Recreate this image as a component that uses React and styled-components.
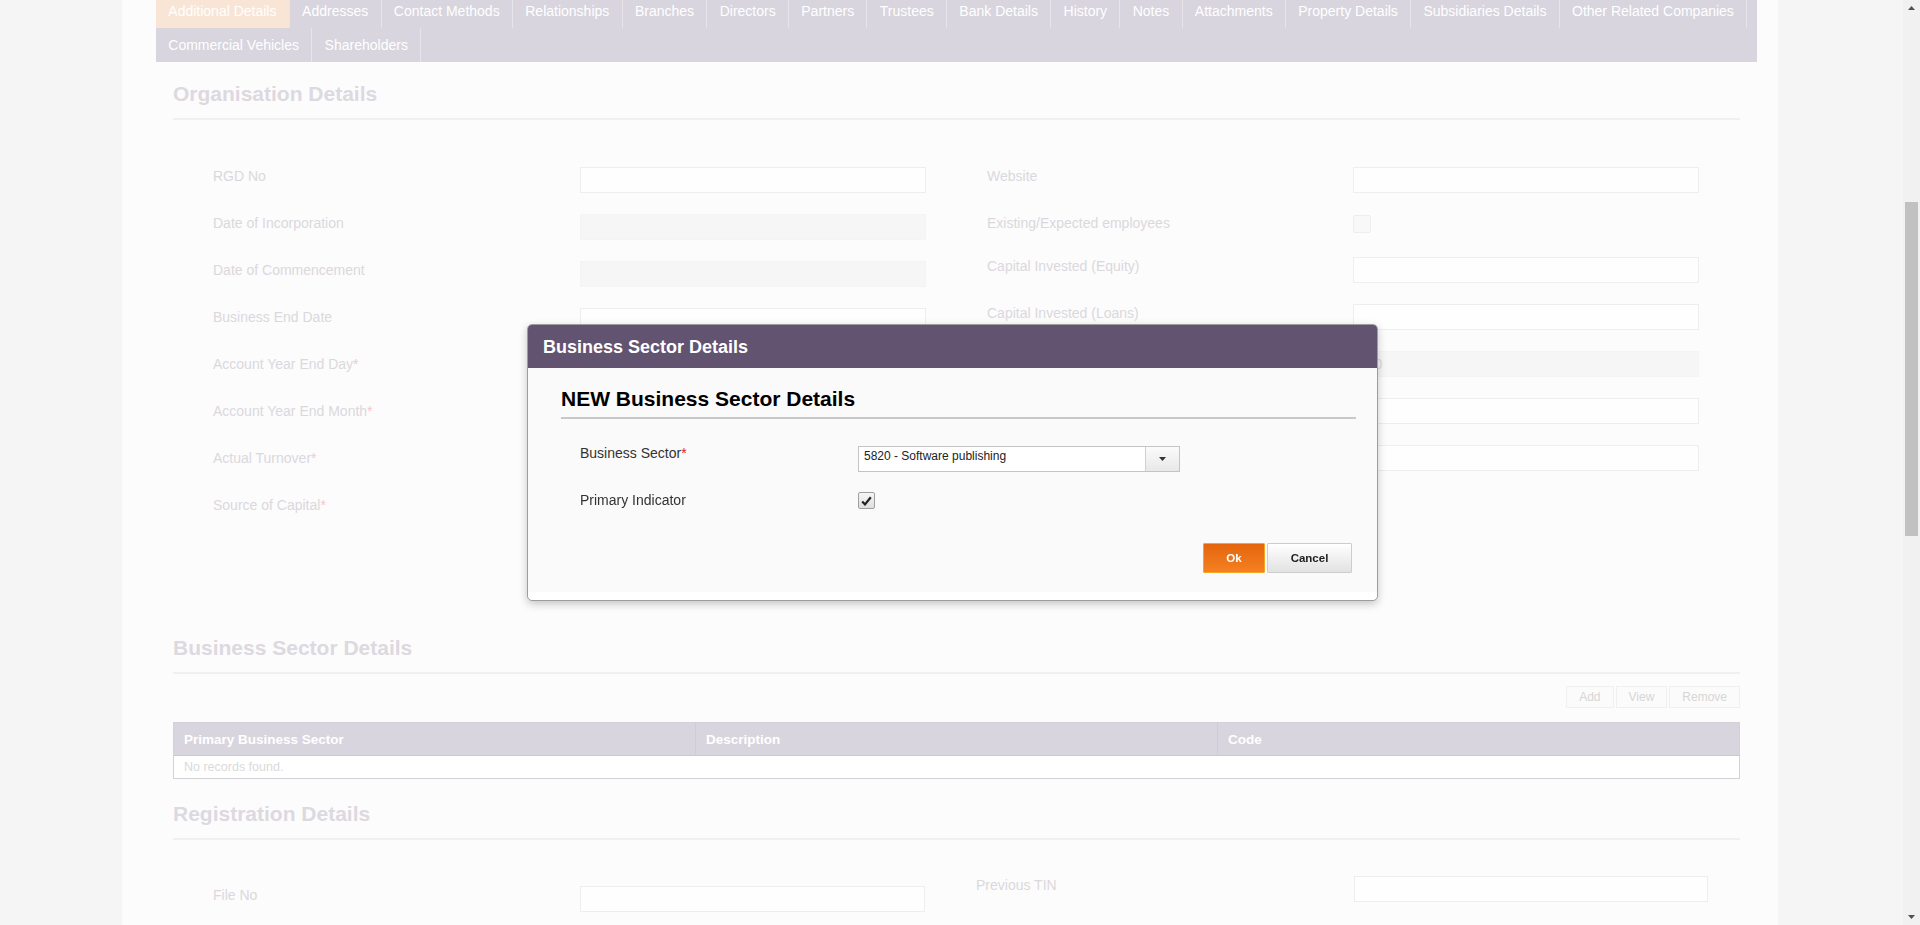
import React from "react";
import styled, { createGlobalStyle } from "styled-components";

const Global = createGlobalStyle`
  html, body { margin: 0; padding: 0; height: 100%; overflow: hidden; }
  body { font-family: "Liberation Sans", Arial, sans-serif; background: #f5f5f5; }
  * { box-sizing: border-box; }
`;

const Screen = styled.div`
  display: flex;
  height: 925px;
  overflow: hidden;
  background: #f5f5f5;
`;

const Viewport = styled.div`
  flex: 1;
  overflow: hidden;
`;

const Panel = styled.div`
  margin-left: 122px;
  width: 1656px;
  min-height: 100%;
  background: #fcfcfc;
  padding: 0 21px 40px 34px;
`;

const TabBar = styled.ul`
  list-style: none;
  margin: -6px 0 0;
  padding: 0;
  display: flex;
  flex-wrap: wrap;
  background: #d8d5de;
`;

const Tab = styled.li`
  height: 34px;
  line-height: 34px;
  padding: 0 12.3px;
  font-size: 14px;
  color: #ffffff;
  white-space: nowrap;
  border-right: 1px solid #e7e5eb;
  background: ${(p) => (p.$active ? "#f9e5d6" : "transparent")};
`;

const Section = styled.section`
  margin: ${(p) => p.$mt}px 17px 0;
`;

const SectionTitle = styled.h2`
  margin: 0;
  font-size: 21px;
  line-height: 24px;
  font-weight: 700;
  color: #dcd9e0;
  padding-bottom: 12px;
  border-bottom: 2px solid #f0f0f0;
`;

const FormGrid = styled.div`
  display: flex;
  align-items: flex-start;
  gap: ${(p) => p.$gap}px;
  padding-left: 40px;
  margin-top: ${(p) => p.$mt}px;
`;

const Column = styled.div`
  display: flex;
  flex-direction: column;
  margin-top: ${(p) => p.$offset || 0}px;
`;

const Field = styled.div`
  display: grid;
  grid-template-columns: ${(p) => p.$labelW}px ${(p) => p.$inputW}px;
  padding-bottom: 20px;
`;

const Label = styled.label`
  font-size: 14px;
  line-height: 20px;
  color: #dbd8dd;
  white-space: nowrap;
`;

const Req = styled.span`
  color: #f6c6c8;
`;

const TextBox = styled.div`
  margin-top: 1px;
  height: 26px;
  border: 1px solid ${(p) => (p.$disabled ? "#f4f4f4" : "#eeeeee")};
  background: ${(p) => (p.$disabled ? "#f6f6f6" : "#fefefe")};
  font-size: 14px;
  line-height: 24px;
  padding: 0 5px;
  color: #d9d9d9;
`;

const CheckCell = styled.div`
  height: 23px;
  padding-top: 2px;
`;

const FadedCheck = styled.span`
  display: block;
  width: 18px;
  height: 18px;
  border: 1px solid #eeeeee;
  border-radius: 2px;
  background: #f8f8f8;
`;

const Toolbar = styled.div`
  display: flex;
  justify-content: flex-end;
  gap: 2px;
  margin-top: 12px;
`;

const ToolButton = styled.button`
  height: 22px;
  padding: 0 12px;
  border: 1px solid #f0f0f0;
  background: #fbfbfb;
  font-family: inherit;
  font-size: 12px;
  color: #d6d6d6;
`;

const Table = styled.table`
  width: 100%;
  margin-top: 14px;
  border-collapse: collapse;
  table-layout: fixed;
  border: 1px solid #d4d2d8;
`;

const Th = styled.th`
  height: 33px;
  padding: 0 10px;
  text-align: left;
  font-size: 13.5px;
  font-weight: 700;
  color: #ffffff;
  background: #d8d5de;
  border-left: 1px solid #cfccd5;
  border-bottom: 1px solid #cbc9cf;
  &:first-child { border-left: none; }
`;

const Td = styled.td`
  height: 23px;
  padding: 0 10px;
  font-size: 12.5px;
  color: #dadada;
  background: #ffffff;
`;

/* ---------- Scrollbar drawing ---------- */
const ScrollBar = () => (
  <svg width="17" height="925" viewBox="0 0 17 925" style={{ display: "block", flex: "none" }}>
    <rect x="0" y="0" width="17" height="925" fill="#f1f1f1" />
    <rect x="2" y="202" width="13" height="334" fill="#c1c1c1" />
    <polygon points="5,10 12,10 8.5,6" fill="#505050" />
    <polygon points="5,915 12,915 8.5,919" fill="#505050" />
  </svg>
);

/* ---------- Modal ---------- */
const Overlay = styled.div`
  position: fixed;
  top: 0;
  left: 0;
  right: 17px;
  bottom: 0;
  display: flex;
  align-items: center;
  justify-content: center;
`;

const Modal = styled.div`
  width: 851px;
  margin-left: 2px;
  background: #ffffff;
  border: 1px solid #9d9d9d;
  border-radius: 5px;
  box-shadow: 0 3px 9px rgba(0, 0, 0, 0.22);
  overflow: hidden;
`;

const ModalHeader = styled.div`
  height: 43px;
  display: flex;
  align-items: center;
  padding: 2px 0 0 15px;
  background: #625371;
  color: #ffffff;
  font-size: 18px;
  font-weight: 700;
`;

const ModalContent = styled.div`
  background: #fafafa;
  margin-bottom: 8px;
  padding: 19px 21px 19px 33px;
`;

const ModalTitle = styled.h3`
  margin: 0;
  font-size: 21px;
  line-height: 24px;
  font-weight: 700;
  color: #000000;
  padding-bottom: 6px;
  border-bottom: 2px solid #c8c8c8;
`;

const ModalForm = styled.div`
  margin-top: 24px;
  padding-left: 19px;
`;

const ModalRow = styled.div`
  display: grid;
  grid-template-columns: 278px 1fr;
  padding-bottom: 18px;
`;

const ModalLabel = styled.label`
  font-size: 14px;
  line-height: 20px;
  color: #333333;
`;

const Star = styled.span`
  color: #e02020;
`;

const Select = styled.div`
  margin-top: 3px;
  width: 322px;
  height: 26px;
  display: flex;
  border: 1px solid #c4c4c4;
  background: #ffffff;
`;

const SelectValue = styled.span`
  flex: 1;
  padding: 0 5px;
  font-size: 12px;
  line-height: 19px;
  color: #222222;
`;

const SelectButton = styled.span`
  width: 34px;
  display: flex;
  align-items: center;
  justify-content: center;
  border-left: 1px solid #d0d0d0;
  background: linear-gradient(#fbfbfb, #e8e8e8);
`;

const CheckBox = styled.span`
  margin-top: 2px;
  width: 17px;
  height: 17px;
  display: flex;
  align-items: center;
  justify-content: center;
  border: 1px solid #9e9e9e;
  border-radius: 2px;
  background: linear-gradient(#f6f6f6, #dedede);
`;

const ButtonRow = styled.div`
  display: flex;
  justify-content: flex-end;
  gap: 2px;
  margin-top: 15px;
  padding-right: 4px;
`;

const Button = styled.button`
  height: 30px;
  width: ${(p) => p.$w}px;
  font-family: inherit;
  font-size: 11.5px;
  font-weight: 700;
  border-radius: 1px;
  color: ${(p) => (p.$primary ? "#ffffff" : "#222222")};
  border: 1px solid ${(p) => (p.$primary ? "#f6a523" : "#cdcdcd")};
  background: ${(p) =>
    p.$primary ? "linear-gradient(#e4650d, #f58022)" : "linear-gradient(#ffffff, #e2e2e2)"};
`;

/* ---------- Data ---------- */
const tabs = [
  "Additional Details", "Addresses", "Contact Methods", "Relationships", "Branches",
  "Directors", "Partners", "Trustees", "Bank Details", "History", "Notes", "Attachments",
  "Property Details", "Subsidiaries Details", "Other Related Companies",
  "Commercial Vehicles", "Shareholders",
];

const orgLeft = [
  { label: "RGD No" },
  { label: "Date of Incorporation", disabled: true },
  { label: "Date of Commencement", disabled: true },
  { label: "Business End Date" },
  { label: "Account Year End Day", req: true },
  { label: "Account Year End Month", req: true },
  { label: "Actual Turnover", req: true },
  { label: "Source of Capital", req: true },
];

const orgRight = [
  { label: "Website" },
  { label: "Existing/Expected employees", check: true },
  { label: "Capital Invested (Equity)" },
  { label: "Capital Invested (Loans)" },
  { label: "Total Capital", disabled: true, value: "100" },
  { label: "Annual Turnover" },
  { label: "Share Capital" },
];

const FormField = ({ f, labelW, inputW }) => (
  <Field $labelW={labelW} $inputW={inputW}>
    <Label>
      {f.label}
      {f.req && <Req>*</Req>}
    </Label>
    {f.check ? (
      <CheckCell>
        <FadedCheck />
      </CheckCell>
    ) : (
      <TextBox $disabled={f.disabled}>{f.value || ""}</TextBox>
    )}
  </Field>
);

export default function App() {
  return (
    <>
      <Global />
      <Screen>
        <Viewport>
          <Panel>
            <TabBar>
              {tabs.map((t, i) => (
                <Tab key={t} $active={i === 0}>
                  {t}
                </Tab>
              ))}
            </TabBar>

            <Section $mt={20}>
              <SectionTitle>Organisation Details</SectionTitle>
              <FormGrid $mt={46} $gap={61}>
                <Column>
                  {orgLeft.map((f) => (
                    <FormField key={f.label} f={f} labelW={367} inputW={346} />
                  ))}
                </Column>
                <Column>
                  {orgRight.map((f) => (
                    <FormField key={f.label} f={f} labelW={366} inputW={346} />
                  ))}
                </Column>
              </FormGrid>
            </Section>

            <Section $mt={94}>
              <SectionTitle>Business Sector Details</SectionTitle>
              <Toolbar>
                <ToolButton>Add</ToolButton>
                <ToolButton>View</ToolButton>
                <ToolButton>Remove</ToolButton>
              </Toolbar>
              <Table>
                <thead>
                  <tr>
                    <Th>Primary Business Sector</Th>
                    <Th>Description</Th>
                    <Th>Code</Th>
                  </tr>
                </thead>
                <tbody>
                  <tr>
                    <Td colSpan={3}>No records found.</Td>
                  </tr>
                </tbody>
              </Table>
            </Section>

            <Section $mt={23}>
              <SectionTitle>Registration Details</SectionTitle>
              <FormGrid $mt={35} $gap={51}>
                <Column $offset={10}>
                  <FormField f={{ label: "File No" }} labelW={367} inputW={345} />
                </Column>
                <Column>
                  <FormField f={{ label: "Previous TIN" }} labelW={378} inputW={354} />
                </Column>
              </FormGrid>
            </Section>
          </Panel>
        </Viewport>
        <ScrollBar />
      </Screen>

      <Overlay>
        <Modal>
          <ModalHeader>Business Sector Details</ModalHeader>
          <ModalContent>
            <ModalTitle>NEW Business Sector Details</ModalTitle>
            <ModalForm>
              <ModalRow>
                <ModalLabel>
                  Business Sector<Star>*</Star>
                </ModalLabel>
                <Select>
                  <SelectValue>5820 - Software publishing</SelectValue>
                  <SelectButton>
                    <svg width="7" height="4" viewBox="0 0 7 4">
                      <polygon points="0,0 7,0 3.5,4" fill="#333" />
                    </svg>
                  </SelectButton>
                </Select>
              </ModalRow>
              <ModalRow>
                <ModalLabel>Primary Indicator</ModalLabel>
                <CheckBox>
                  <svg width="11" height="10" viewBox="0 0 11 10">
                    <path d="M1.2 5.4 L4 8.4 L9.8 1.2" fill="none" stroke="#222" strokeWidth="2.2" />
                  </svg>
                </CheckBox>
              </ModalRow>
            </ModalForm>
            <ButtonRow>
              <Button $primary $w={62}>Ok</Button>
              <Button $w={85}>Cancel</Button>
            </ButtonRow>
          </ModalContent>
        </Modal>
      </Overlay>
    </>
  );
}
